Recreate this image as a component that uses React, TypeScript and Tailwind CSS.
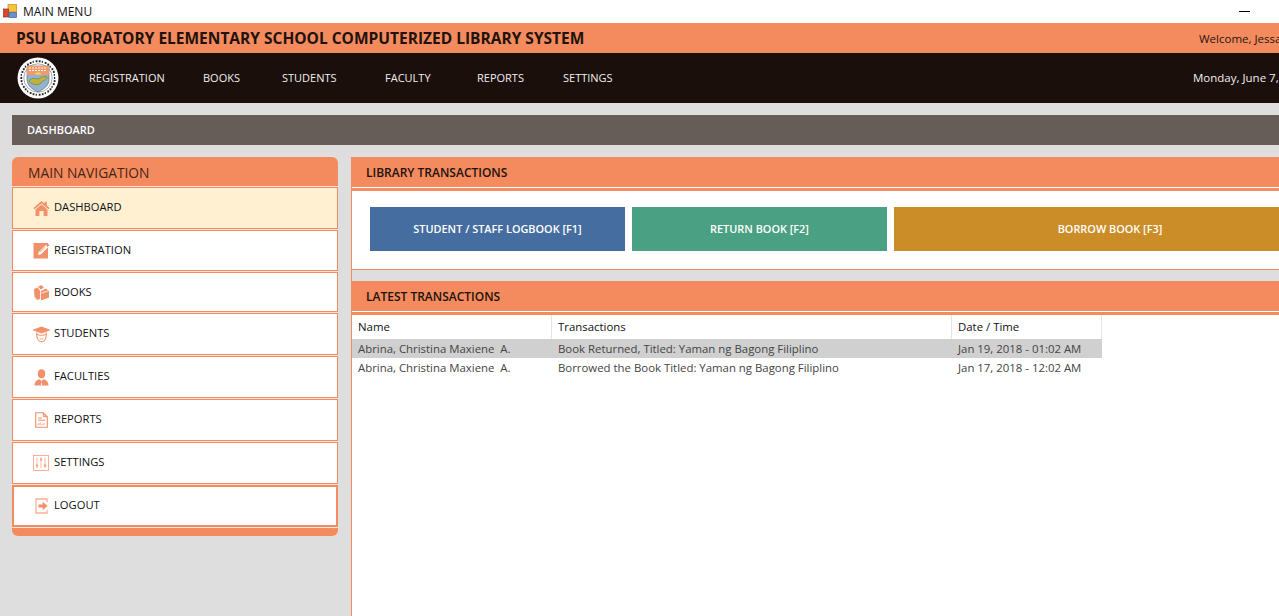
import React from 'react'

const ORANGE = '#f2906a'

function HomeIcon() {
  return (
    <svg width="17" height="17" viewBox="0 0 17 17" fill={ORANGE}>
      <path d="M8.5 1 L0.5 8 L1.6 9.2 L8.5 3.4 L15.4 9.2 L16.5 8 L13.8 5.6 V1.8 H11.6 V3.7 Z" />
      <path d="M2.5 9.6 L8.5 4.6 L14.5 9.6 V16 H10.6 V11 H6.4 V16 H2.5 Z" />
    </svg>
  )
}

function RegistrationIcon() {
  return (
    <svg width="17" height="17" viewBox="0 0 17 17">
      <rect x="0.5" y="1" width="14.5" height="15.5" fill={ORANGE} />
      <path d="M5 13 L5.8 10 L12.8 3 L15 5.2 L8 12.2 Z" fill="#fff" />
      <path d="M13.6 2.2 L14.6 1.2 L16.6 3.2 L15.6 4.2 Z" fill={ORANGE} />
      <path d="M6.8 10.4 L12.6 4.6" stroke={ORANGE} strokeWidth="0.8" />
    </svg>
  )
}

function BooksIcon() {
  return (
    <svg width="17" height="17" viewBox="0 0 17 17" fill={ORANGE}>
      <path d="M1 5 L4.5 3.5 L7 6.5 V15 L4 16 L1.5 12.5 Z" />
      <path d="M5 2.8 L8.5 1 L11 3.8 L7.6 5.6 Z" />
      <path d="M7.8 7 L13 4.6 L16 7 V13.5 L8 16.5 Z" />
      <path d="M8.3 9.2 L15.8 6.6" stroke="#fff" strokeWidth="0.8" />
    </svg>
  )
}

function StudentIcon() {
  return (
    <svg width="17" height="17" viewBox="0 0 17 17" fill="none" stroke={ORANGE}>
      <path d="M0.5 4 L8.5 1 L16.5 4 L8.5 7 Z" fill={ORANGE} />
      <path d="M3.8 6.6 V9.5 C3.8 13 6 15.8 8.5 15.8 C11 15.8 13.2 13 13.2 9.5 V6.6" strokeWidth="1.1" />
      <path d="M3.8 8.4 C6.5 9.6 10.5 9.6 13.2 8.4" strokeWidth="1" />
      <path d="M6.6 12.4 C7.6 13.2 9.4 13.2 10.4 12.4" strokeWidth="0.8" />
    </svg>
  )
}

function FacultyIcon() {
  return (
    <svg width="15" height="17" viewBox="0 0 15 17" fill={ORANGE}>
      <ellipse cx="7.5" cy="4.8" rx="3.7" ry="4.5" />
      <path d="M0.5 16.5 C0.5 12.8 2.6 11 5.6 10.2 L7.5 12.2 L9.4 10.2 C12.4 11 14.5 12.8 14.5 16.5 Z" />
      <path d="M7.5 12.4 L6.8 16.5 H8.2 Z" fill="#fff" />
    </svg>
  )
}

function ReportIcon() {
  return (
    <svg width="13" height="16" viewBox="0 0 13 16" fill="none" stroke={ORANGE}>
      <path d="M0.7 0.7 H8.3 L12.3 4.7 V15.3 H0.7 Z" strokeWidth="1.1" />
      <path d="M8.3 0.7 V4.7 H12.3" fill={ORANGE} fillOpacity="0.5" strokeWidth="1" />
      <path d="M3 6 H7 M3 8.2 H10" strokeWidth="1" />
      <path d="M3 13.2 V11.5 M5 13.2 V10.5 M7 13.2 V12 M9 13.2 V11" strokeWidth="0.9" />
    </svg>
  )
}

function SettingsIcon() {
  return (
    <svg width="16" height="16" viewBox="0 0 16 16" fill="none" stroke={ORANGE} opacity="0.85">
      <rect x="0.5" y="0.5" width="15" height="15" strokeWidth="0.8" />
      <path d="M4 2.5 V13 M8 2.5 V13 M12 2.5 V13" strokeWidth="0.7" />
      <path d="M2.8 9.8 H5.2 L4 12.2 Z M6.8 5.2 H9.2 L8 2.8 Z M10.8 9.8 H13.2 L12 12.2 Z" fill={ORANGE} strokeWidth="0.4" />
    </svg>
  )
}

function LogoutIcon() {
  return (
    <svg width="13" height="16" viewBox="0 0 13 16" fill="none" stroke={ORANGE}>
      <path d="M12 4 V1 H1 V15 H12 V12" strokeWidth="1.3" opacity="0.7" />
      <path d="M3.5 6.4 H7.6 V3.8 L12.6 8 L7.6 12.2 V9.6 H3.5 Z" fill={ORANGE} stroke="none" />
    </svg>
  )
}

function Seal() {
  const dots = Array.from({ length: 34 }, (_, i) => {
    const a = (i / 34) * Math.PI * 2
    return { x: 21 + Math.cos(a) * 16.8, y: 21 + Math.sin(a) * 16.8 }
  })
  return (
    <svg width="42" height="42" viewBox="0 0 42 42">
      <circle cx="21" cy="21" r="20.5" fill="#fff" />
      {dots.map((d, i) => (
        <rect key={i} x={d.x - 0.8} y={d.y - 1} width={i % 3 === 0 ? 1.2 : 1.8} height="2" fill="#2a2a2a" />
      ))}
      <circle cx="21" cy="21" r="14.2" fill="#fff" stroke="#555" strokeWidth="0.5" />
      <path d="M10 9 H32 V22 C32 29 27 32 21 35 C15 32 10 29 10 22 Z" fill="#8fb5cf" stroke="#444" strokeWidth="0.5" />
      <path d="M10 9 H32 V18 H10 Z" fill="#ef9a6c" />
      <path d="M12 11 H30 M12 13.5 H30" stroke="#fff" strokeWidth="0.9" strokeDasharray="2 1" />
      <path d="M18 17.5 C18 14.5 24 14.5 24 17.5 Z" fill="#f4d35e" />
      <path d="M12 24 C15 19 19 23 22 21.5 C25 20 29 18 30 20 C30 24 25 23 24 26 C21 29 15 28 12 24 Z" fill="#c4b13c" stroke="#4d5a22" strokeWidth="0.4" />
    </svg>
  )
}

const navItems = [
  { label: 'REGISTRATION', className: 'w-[114px]' },
  { label: 'BOOKS', className: 'w-[79px]' },
  { label: 'STUDENTS', className: 'w-[103px]' },
  { label: 'FACULTY', className: 'w-[92px]' },
  { label: 'REPORTS', className: 'w-[86px]' },
  { label: 'SETTINGS', className: 'w-[70px]' },
]

const sideItems = [
  { label: 'DASHBOARD', icon: <HomeIcon />, box: 'h-[42px] bg-[#fff0d2]', text: 'mb-[2px]' },
  { label: 'REGISTRATION', icon: <RegistrationIcon />, box: 'h-[41px] mt-px bg-white', text: 'mb-[1px]' },
  { label: 'BOOKS', icon: <BooksIcon />, box: 'h-[40px] mt-px bg-white', text: 'mb-0' },
  { label: 'STUDENTS', icon: <StudentIcon />, box: 'h-[42px] mt-px bg-white', text: 'mb-[2px]' },
  { label: 'FACULTIES', icon: <FacultyIcon />, box: 'h-[42px] mt-px bg-white', text: 'mb-[2px]' },
  { label: 'REPORTS', icon: <ReportIcon />, box: 'h-[42px] mt-px bg-white', text: 'mb-[2px]' },
  { label: 'SETTINGS', icon: <SettingsIcon />, box: 'h-[42px] mt-px bg-white', text: 'mb-[2px]' },
]

const rows = [
  {
    name: 'Abrina, Christina Maxiene  A.',
    text: 'Book Returned, Titled: Yaman ng Bagong Filiplino',
    date: 'Jan 19, 2018 - 01:02 AM',
    selected: true,
  },
  {
    name: 'Abrina, Christina Maxiene  A.',
    text: 'Borrowed the Book Titled: Yaman ng Bagong Filiplino',
    date: 'Jan 17, 2018 - 12:02 AM',
    selected: false,
  },
]

export default function App() {
  return (
    <div className="w-[1279px] h-[616px] overflow-hidden bg-[#dedede] flex flex-col font-['Open_Sans',sans-serif]">
      {/* window title */}
      <div className="h-[23px] bg-white flex items-center shrink-0">
        <svg width="14" height="14" viewBox="0 0 14 14" className="ml-[3px] mb-[1px]">
          <rect x="5" y="0.5" width="8.5" height="7.5" fill="#f5c23c" stroke="#b98a20" strokeWidth="0.7" />
          <rect x="0.5" y="5" width="5" height="8" fill="#d9482e" stroke="#94301e" strokeWidth="0.7" />
          <rect x="6" y="8.5" width="7.5" height="5" fill="#6d8fcb" stroke="#43609a" strokeWidth="0.7" />
        </svg>
        <span className="ml-[6px] text-[12px] text-[#111] leading-none">MAIN MENU</span>
        <div className="ml-auto mr-[29px] w-[11px] h-px bg-black" />
      </div>

      {/* school name */}
      <div className="h-[30px] bg-[#f38b5f] flex items-center shrink-0">
        <span className="ml-[16px] mt-px text-[15.5px] font-bold text-[#22120b] whitespace-nowrap">
          PSU LABORATORY ELEMENTARY SCHOOL COMPUTERIZED LIBRARY SYSTEM
        </span>
        <span className="ml-auto mt-px w-[80px] overflow-hidden whitespace-nowrap text-[11.5px] text-[#2a150c]">
          Welcome, Jessa
        </span>
      </div>

      {/* top nav */}
      <div className="h-[50px] bg-[#1a0f0a] flex items-center shrink-0">
        <div className="ml-[17px] w-[72px] shrink-0">
          <Seal />
        </div>
        {navItems.map((item) => (
          <span key={item.label} className={`${item.className} shrink-0 text-[11px] text-[#f0eeee] whitespace-nowrap`}>
            {item.label}
          </span>
        ))}
        <span className="ml-auto w-[86px] overflow-hidden whitespace-nowrap text-[11.5px] text-[#f0eeee]">
          Monday, June 7,
        </span>
      </div>

      {/* page title */}
      <div className="mt-[12px] ml-[12px] h-[30px] bg-[#665d59] flex items-center shrink-0">
        <span className="ml-[15px] text-[11px] font-semibold text-white">DASHBOARD</span>
      </div>

      <div className="flex flex-1 mt-[12px] min-h-0">
        {/* sidebar */}
        <div className="ml-[12px] w-[326px] h-[379px] shrink-0 bg-[#f38b5f] rounded-[6px] flex flex-col">
          <div className="h-[29px] flex items-center shrink-0">
            <span className="ml-[16px] text-[13.8px] text-[#4a2412] leading-none mt-[3px]">MAIN NAVIGATION</span>
          </div>
          <div className="bg-[#fbe3d6] py-px flex flex-col">
            {sideItems.map((item) => (
              <div
                key={item.label}
                className={`${item.box} border border-[#f38b5f] flex items-center pl-[17px] shrink-0`}
              >
                <div className="w-[22px] flex justify-center shrink-0">{item.icon}</div>
                <span className={`${item.text} text-[11.2px] text-[#111] ml-[2px]`}>{item.label}</span>
              </div>
            ))}
            <div className="h-[42px] mt-px border-2 border-[#f38b5f] flex items-center pl-[16px] bg-white shrink-0">
              <div className="w-[22px] flex justify-center shrink-0">
                <LogoutIcon />
              </div>
              <span className="mb-[2px] text-[11.2px] text-[#111] ml-[2px]">LOGOUT</span>
            </div>
          </div>
        </div>

        {/* main */}
        <div className="ml-[13px] flex-1 flex flex-col min-w-0 border-l border-l-[#f38b5f]">
          <div className="h-[30px] bg-[#f38b5f] flex items-center shrink-0">
            <span className="ml-[14px] mt-px text-[12px] font-semibold text-[#22120b]">LIBRARY TRANSACTIONS</span>
          </div>
          <div className="h-[83px] bg-white pt-px shrink-0 flex flex-col">
            <div className="h-[3px] bg-[#f38b5f] shrink-0" />
            <div className="flex gap-[7px] pl-[18px] pt-[16px] flex-1">
              <button className="w-[255px] h-[44px] pt-px shrink-0 bg-[#466da0] text-white text-[10.9px] font-semibold">
                STUDENT / STAFF LOGBOOK [F1]
              </button>
              <button className="w-[255px] h-[44px] pt-px shrink-0 bg-[#4aa083] text-white text-[10.9px] font-semibold">
                RETURN BOOK [F2]
              </button>
              <button className="w-[432px] h-[44px] pt-px shrink-0 bg-[#cb8d27] text-white text-[10.9px] font-semibold">
                BORROW BOOK [F3]
              </button>
            </div>
            <div className="h-px bg-[#f38b5f] shrink-0" />
          </div>

          <div className="h-[11px] shrink-0" />

          <div className="h-[30px] bg-[#f38b5f] flex items-center shrink-0">
            <span className="ml-[14px] mt-px text-[12px] font-semibold text-[#22120b]">LATEST TRANSACTIONS</span>
          </div>
          <div className="flex-1 bg-white pt-px flex flex-col">
            <div className="h-[3px] bg-[#f38b5f] shrink-0" />
            <div className="w-[750px] h-[24px] grid grid-cols-[200px_400px_150px] text-[11.4px] text-[#111] shrink-0">
              <div className="border-r border-[#e4e4e4] pl-[6px] flex items-center">Name</div>
              <div className="border-r border-[#e4e4e4] pl-[6px] flex items-center">Transactions</div>
              <div className="border-r border-[#e4e4e4] pl-[6px] flex items-center">Date / Time</div>
            </div>
            {rows.map((row) => (
              <div
                key={row.date}
                className={`w-[750px] h-[19px] grid grid-cols-[200px_400px_150px] items-center text-[11.4px] text-[#444] whitespace-pre ${
                  row.selected ? 'bg-[#d0d0d0]' : 'bg-white'
                }`}
              >
                <div className="pl-[6px]">{row.name}</div>
                <div className="pl-[6px]">{row.text}</div>
                <div className="pl-[6px]">{row.date}</div>
              </div>
            ))}
          </div>
        </div>
      </div>
    </div>
  )
}
